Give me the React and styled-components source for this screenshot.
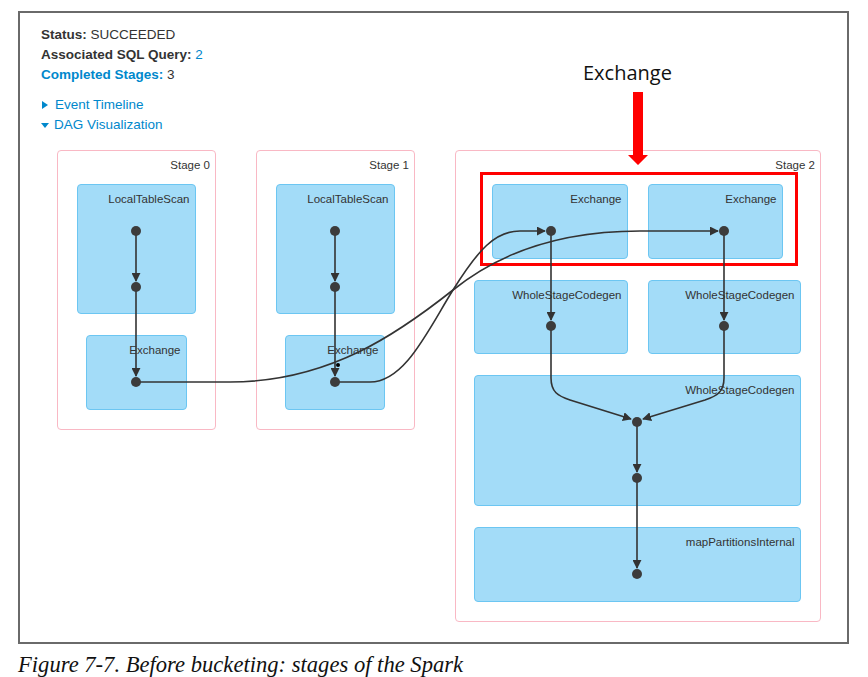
import React from "react";
import styled, { createGlobalStyle } from "styled-components";

// page coordinates of the dag canvas origin
const OX = 20;
const OY = 150;

const stages = [
  {
    name: "Stage 0",
    x: 57, y: 150, w: 159, h: 280,
    ops: [
      { name: "LocalTableScan", x: 77, y: 184, w: 119, h: 130 },
      { name: "Exchange", x: 86, y: 335, w: 101, h: 75 },
    ],
  },
  {
    name: "Stage 1",
    x: 256, y: 150, w: 159, h: 280,
    ops: [
      { name: "LocalTableScan", x: 276, y: 184, w: 119, h: 130 },
      { name: "Exchange", x: 285, y: 335, w: 100, h: 75 },
    ],
  },
  {
    name: "Stage 2",
    x: 455, y: 150, w: 366, h: 472,
    ops: [
      { name: "Exchange", x: 492, y: 184, w: 136, h: 75 },
      { name: "Exchange", x: 648, y: 184, w: 135, h: 75 },
      { name: "WholeStageCodegen", x: 474, y: 280, w: 154, h: 74 },
      { name: "WholeStageCodegen", x: 648, y: 280, w: 153, h: 74 },
      { name: "WholeStageCodegen", x: 474, y: 375, w: 327, h: 131 },
      { name: "mapPartitionsInternal", x: 474, y: 527, w: 327, h: 75 },
    ],
  },
];

const nodes = [
  [136, 231], [136, 287], [136, 382],
  [335, 231], [335, 287], [335, 382],
  [551, 231], [724, 231], [551, 326], [724, 326],
  [637, 422], [637, 478], [637, 574],
];

// every edge ends in an arrowhead touching the next node
const edges = [
  "M136,231 L136,281",
  "M136,287 L136,376",
  "M335,231 L335,281",
  "M335,287 L335,376",
  "M136,382 L230,382 C330,382 400,332 453,290 C500,252 560,231 640,231 L718,231",
  "M335,382 L370,382 C405,382 428,330 453,290 C478,250 495,231 520,231 L545,231",
  "M551,231 L551,320",
  "M724,231 L724,320",
  "M551,326 L551,378 C551,392 558,396 570,400 L631,419",
  "M724,326 L724,378 C724,392 717,396 705,400 L643,419",
  "M637,422 L637,472",
  "M637,478 L637,568",
];

const GlobalStyle = createGlobalStyle`
  body {
    margin: 0;
    background: #fff;
    font-family: "Liberation Sans", Arial, sans-serif;
  }
`;

const Page = styled.div`
  width: 868px;
  height: 677px;
  overflow: hidden;
  padding-top: 11px;
  box-sizing: border-box;
`;

const Frame = styled.div`
  position: relative;
  margin-left: 18px;
  width: 831px;
  height: 633px;
  box-sizing: border-box;
  border: 2px solid #6a6a6a;
  padding: 12px 0 0 21px;
`;

const Summary = styled.ul`
  list-style: none;
  margin: 0;
  padding: 0;
  font-size: 13.5px;
  line-height: 20px;
  color: #333;
`;

const Key = styled.strong`
  font-weight: bold;
  color: ${(p) => (p.$link ? "#0088cc" : "#333")};
`;

const Link = styled.span`
  color: #0088cc;
`;

const Toggles = styled.div`
  margin-top: 10px;
  font-size: 13.5px;
  line-height: 20px;
  color: #0088cc;
`;

const Toggle = styled.div`
  display: flex;
  align-items: center;
  gap: 5px;
`;

const Caret = styled.span`
  width: 0;
  height: 0;
  ${(p) =>
    p.$open
      ? `border-top: 5px solid #0088cc;
         border-left: 4.5px solid transparent;
         border-right: 4.5px solid transparent;`
      : `border-left: 6px solid #0088cc;
         border-top: 4px solid transparent;
         border-bottom: 4px solid transparent;
         margin: 0 2px 0 1px;`}
`;

const DagCanvas = styled.div`
  position: absolute;
  left: 0;
  top: ${OY - 13}px;
  width: 827px;
  height: 480px;
  font-size: 11.5px;
  color: #333;
`;

const Cluster = styled.div`
  position: absolute;
  left: ${(p) => p.$x - OX}px;
  top: ${(p) => p.$y - OY}px;
  width: ${(p) => p.$w}px;
  height: ${(p) => p.$h}px;
  box-sizing: border-box;
  border: 1.5px solid #f9b8c4;
  border-radius: 4px;
  background: #fff;
`;

const ClusterLabel = styled.div`
  text-align: right;
  padding: 7px 5px 0 0;
  line-height: 14px;
`;

const OpBox = styled.div`
  position: absolute;
  left: ${(p) => p.$x - 1.5}px;
  top: ${(p) => p.$y - 1.5}px;
  width: ${(p) => p.$w}px;
  height: ${(p) => p.$h}px;
  box-sizing: border-box;
  border: 1.5px solid #6cc6f2;
  border-radius: 4px;
  background: #a3dcf8;
  text-align: right;
  padding: 7px 5px 0 0;
  line-height: 14px;
  white-space: nowrap;
`;

const Edges = styled.svg`
  position: absolute;
  left: 0;
  top: 0;
  overflow: visible;
  pointer-events: none;
`;

const Highlight = styled.div`
  position: absolute;
  left: ${480 - OX}px;
  top: ${172 - OY}px;
  width: 318px;
  height: 94px;
  box-sizing: border-box;
  border: 3px solid #ff0000;
`;

const CalloutLabel = styled.div`
  position: absolute;
  left: ${583 - 20}px;
  top: ${61 - 13}px;
  font-family: "Open Sans", "Noto Sans", sans-serif;
  font-size: 20px;
  line-height: 24px;
  color: #111;
`;

const CalloutArrow = styled.svg`
  position: absolute;
  z-index: 2;
  left: ${627 - 20}px;
  top: ${92 - 13}px;
`;

const Caption = styled.div`
  margin: 9px 0 0 18px;
  font-family: "Liberation Serif", "Times New Roman", serif;
  font-style: italic;
  font-size: 22.6px;
  line-height: 24px;
  color: #111;
  white-space: nowrap;
`;

export default function App() {
  return (
    <Page>
      <GlobalStyle />
      <Frame>
        <Summary>
          <li>
            <Key>Status:</Key> SUCCEEDED
          </li>
          <li>
            <Key>Associated SQL Query:</Key> <Link>2</Link>
          </li>
          <li>
            <Key $link>Completed Stages:</Key> 3
          </li>
        </Summary>
        <Toggles>
          <Toggle>
            <Caret />
            Event Timeline
          </Toggle>
          <Toggle>
            <Caret $open />
            DAG Visualization
          </Toggle>
        </Toggles>

        <CalloutLabel>Exchange</CalloutLabel>
        <CalloutArrow width="22" height="74" viewBox="0 0 22 74">
          <path d="M6,0 H16 V63 H21 L11,73 L1,63 H6 Z" fill="#ff0000" />
        </CalloutArrow>

        <DagCanvas>
          {stages.map((s) => (
            <Cluster key={s.name} $x={s.x} $y={s.y} $w={s.w} $h={s.h}>
              <ClusterLabel>{s.name}</ClusterLabel>
              {s.ops.map((o, i) => (
                <OpBox
                  key={i}
                  $x={o.x - s.x}
                  $y={o.y - s.y}
                  $w={o.w}
                  $h={o.h}
                >
                  {o.name}
                </OpBox>
              ))}
            </Cluster>
          ))}
          <Highlight />
          <Edges width="827" height="480" viewBox={`${OX} ${OY} 827 480`}>
            <defs>
              <marker
                id="head"
                viewBox="0 0 10 10"
                refX="9"
                refY="5"
                markerUnits="userSpaceOnUse"
                markerWidth="9"
                markerHeight="9"
                orient="auto"
              >
                <path d="M0,0 L10,5 L0,10 z" fill="#333" />
              </marker>
            </defs>
            {edges.map((d, i) => (
              <path
                key={i}
                d={d}
                fill="none"
                stroke="#333"
                strokeWidth="1.6"
                markerEnd="url(#head)"
              />
            ))}
            <circle cx="338" cy="365" r="2" fill="#000" />
            {nodes.map(([x, y], i) => (
              <circle key={i} cx={x} cy={y} r="5" fill="#3c3c3c" />
            ))}
          </Edges>
        </DagCanvas>
      </Frame>
      <Caption>Figure 7-7. Before bucketing: stages of the Spark</Caption>
    </Page>
  );
}
